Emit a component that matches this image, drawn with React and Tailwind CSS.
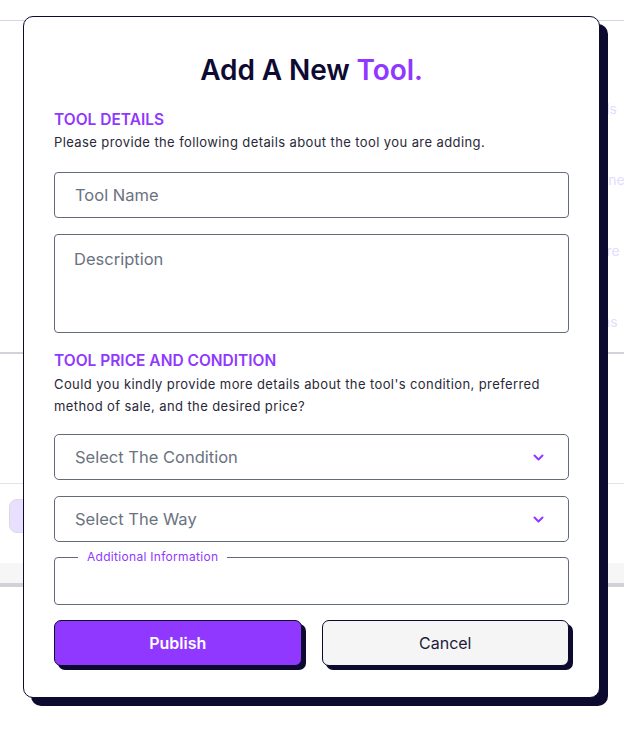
export default function App() {
  const purple = "#9038ff";
  return (
    <div className="relative w-[624px] h-[734px] overflow-hidden bg-white font-['Inter',sans-serif]">
      {/* background page */}
      <div className="flex flex-col">
        <div className="h-[20px]" />
        <div className="h-[332px] border-t border-[#d6d2ea] flex flex-col items-end">
          <div className="flex flex-col gap-[51px] pt-[78px] text-[14px] leading-[20px] text-[#e4dcff] -mr-[6px]">
            <span>Tools</span>
            <span>Partner</span>
            <span>Share</span>
            <span>Items</span>
          </div>
        </div>
        <div className="h-[2px] bg-[#d3d2da]" />
        <div className="h-[129px]" />
        <div className="h-px bg-[#e4e4e7]" />
        <div className="h-[15px]" />
        <div className="ml-[9px] w-[120px] h-[34px] rounded-[8px] bg-[#e9e0ff] border border-[#dad8e2]" />
        <div className="h-[30px]" />
        <div className="h-[20px] bg-[#f6f6f7]" />
        <div className="h-[4px] bg-[#d2d1d9]" />
      </div>

      {/* modal */}
      <div className="absolute left-[23px] top-[16px] w-[577px] h-[682px] rounded-[10px] border border-[#0c0a2e] bg-white shadow-[8px_8px_0_0_#0c0a2e] px-[30px] flex flex-col">
        <h1 className="mt-[36px] text-center text-[28px] leading-[34px] font-semibold text-[#0e0b33] tracking-[-0.1px]">
          Add A New <span className="text-[#9038ff]">Tool.</span>
        </h1>
        <h2 className="mt-[23px] text-[15.5px] leading-[20px] font-semibold text-[#9038ff] uppercase">Tool Details</h2>
        <p className="mt-[3px] text-[13px] leading-[18px] tracking-[0.4px] text-[#2a2838]">
          Please provide the following details about the tool you are adding.
        </p>
        <input
          className="mt-[21px] h-[46px] w-full rounded-[4px] border border-[#636a7d] px-[20px] text-[16.5px] text-[#2a2838] placeholder:text-[#6b7280] outline-none"
          placeholder="Tool Name"
        />
        <textarea
          className="mt-[16px] h-[99px] w-full resize-none rounded-[4px] border border-[#636a7d] px-[19px] pt-[12px] text-[16.5px] leading-[24px] text-[#2a2838] placeholder:text-[#6b7280] outline-none"
          placeholder="Description"
        />
        <h2 className="mt-[18px] text-[15.5px] leading-[20px] font-semibold text-[#9038ff] uppercase">Tool Price and Condition</h2>
        <p className="mt-[2px] text-[13px] leading-[22px] tracking-[0.4px] text-[#2a2838]">
          Could you kindly provide more details about the tool's condition, preferred method of sale, and the desired price?
        </p>
        <div className="mt-[17px] h-[46px] w-full rounded-[5px] border border-[#636a7d] pl-[20px] pr-[24px] flex items-center justify-between">
          <span className="text-[16.5px] text-[#6b7280]">Select The Condition</span>
          <svg width="11" height="7" viewBox="0 0 11 7" fill="none">
            <path d="M1.5 1.5l4 4 4-4" stroke={purple} strokeWidth="2" strokeLinecap="round" strokeLinejoin="round" />
          </svg>
        </div>
        <div className="mt-[16px] h-[46px] w-full rounded-[5px] border border-[#636a7d] pl-[20px] pr-[24px] flex items-center justify-between">
          <span className="text-[16.5px] text-[#6b7280]">Select The Way</span>
          <svg width="11" height="7" viewBox="0 0 11 7" fill="none">
            <path d="M1.5 1.5l4 4 4-4" stroke={purple} strokeWidth="2" strokeLinecap="round" strokeLinejoin="round" />
          </svg>
        </div>
        <fieldset className="mt-[8px] h-[55px] w-full rounded-[4px] border border-[#636a7d]">
          <legend className="ml-[23px] px-[9px] text-[12px] leading-[14px] tracking-[0.3px] text-[#9038ff]">Additional Information</legend>
        </fieldset>
        <div className="mt-[15px] flex gap-[20px]">
          <button className="flex-1 h-[46px] rounded-[7px] border border-[#0c0a2e] bg-[#9038ff] text-white text-[16px] font-semibold shadow-[4px_4px_0_0_#0c0a2e]">
            Publish
          </button>
          <button className="flex-1 h-[46px] rounded-[7px] border border-[#0c0a2e] bg-[#f5f5f5] text-[#1d1b3a] text-[16px] font-normal shadow-[4px_4px_0_0_#0c0a2e]">
            Cancel
          </button>
        </div>
      </div>
    </div>
  );
}
